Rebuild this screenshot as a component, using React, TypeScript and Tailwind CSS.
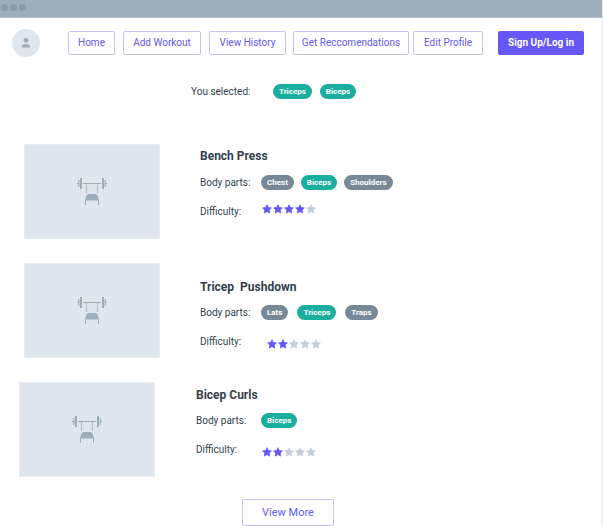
import React from "react";

type Tag = { name: string; active?: boolean };

type Exercise = {
  title: string;
  tags: Tag[];
  rating: number;
  rowClass: string;
  infoClass: string;
  bodyClass: string;
  labelClass: string;
  tagsClass: string;
  starsClass: string;
};

const navItems = [
  { label: "Home", className: "w-[47px]" },
  { label: "Add Workout", className: "ml-2 w-[78px]" },
  { label: "View History", className: "ml-2 w-[77px]" },
  { label: "Get Reccomendations", className: "ml-[7px] w-[116px]" },
  { label: "Edit Profile", className: "ml-1 w-[70px]" },
];

const exercises: Exercise[] = [
  {
    title: "Bench Press",
    tags: [{ name: "Chest" }, { name: "Biceps", active: true }, { name: "Shoulders" }],
    rating: 4,
    rowClass: "ml-6 mt-[43px]",
    infoClass: "ml-10 pt-[2px]",
    bodyClass: "mt-[6px]",
    labelClass: "w-[61px]",
    tagsClass: "gap-[7px]",
    starsClass: "pb-1",
  },
  {
    title: "Tricep  Pushdown",
    tags: [{ name: "Lats" }, { name: "Triceps", active: true }, { name: "Traps" }],
    rating: 2,
    rowClass: "ml-6 mt-6",
    infoClass: "ml-10 pt-[14px]",
    bodyClass: "mt-[5px]",
    labelClass: "w-[61px]",
    tagsClass: "gap-[9px]",
    starsClass: "ml-[5px] pt-[6px]",
  },
  {
    title: "Bicep Curls",
    tags: [{ name: "Biceps", active: true }],
    rating: 2,
    rowClass: "ml-[19px] mt-6",
    infoClass: "ml-[41px] pt-[3px]",
    bodyClass: "mt-[5px]",
    labelClass: "w-[65px]",
    tagsClass: "gap-2",
    starsClass: "pt-[6px]",
  },
];

function Pill({ name, active }: Tag) {
  return (
    <span
      className={`flex h-[15px] items-center rounded-full px-[6px] text-[8px] leading-[15px] font-bold text-white ${
        active ? "bg-[#1aae9f]" : "bg-[#788896]"
      }`}
    >
      {name}
    </span>
  );
}

function Stars({ rating, className }: { rating: number; className: string }) {
  return (
    <div className={`flex gap-px pl-px ${className}`} role="img" aria-label={`${rating} out of 5`}>
      {[1, 2, 3, 4, 5].map((n) => (
        <svg
          key={n}
          viewBox="0 0 20 20"
          strokeWidth="1.6"
          strokeLinejoin="round"
          className={`h-[10px] w-[10px] ${
            n <= rating ? "fill-[#6558f5] stroke-[#6558f5]" : "fill-[#c3cfd9] stroke-[#c3cfd9]"
          }`}
        >
          <path d="M10 1.500l2.600 5.600 6.200.7-4.600 4.200 1.300 6.100L10 15l-5.500 3.100 1.300-6.100L1.200 7.800l6.200-.7z" />
        </svg>
      ))}
    </div>
  );
}

function BenchIcon() {
  return (
    <svg viewBox="0 0 30 27" className="h-[27px] w-[30px] fill-[#9eadba]">
      <rect x="0" y="5" width="2" height="1" />
      <rect x="28" y="5" width="2" height="1" />
      <rect x="6" y="5" width="18" height="1" />
      <rect x="1" y="2" width="1.500" height="7" opacity=".8" />
      <rect x="3" y="0" width="2" height="11" />
      <rect x="25" y="0" width="2" height="11" />
      <rect x="27.500" y="2" width="1.500" height="7" opacity=".8" />
      <rect x="9" y="6" width="1" height="9" opacity=".8" />
      <rect x="20" y="6" width="1" height="9" opacity=".8" />
      <path d="M11.500 16h7q1.500 0 2 1.500l1.500 4.500v5h-1v-4.500H9V27H8v-5l1.500-4.500q.5-1.500 2-1.500z" />
    </svg>
  );
}

export default function App() {
  return (
    <div className="overflow-hidden border-r border-[#e3e8ed] bg-white font-['Roboto',sans-serif] text-[10px] text-[#323f4b]">
      <div className="flex h-[18px] items-center gap-[2px] border-b border-[#b4c0ca] bg-[#9eadba] pb-[2px] pl-[1px]">
        <span className="h-[7px] w-[7px] rounded-full bg-[#8b9aa8]" />
        <span className="h-[7px] w-[7px] rounded-full bg-[#8b9aa8]" />
        <span className="h-[7px] w-[7px] rounded-full bg-[#8b9aa8]" />
      </div>

      <header className="mt-[11px] flex items-center pl-3">
        <div className="flex h-7 w-7 items-center justify-center rounded-full bg-[#dfe6ed]">
          <svg viewBox="0 0 16 16" className="h-3 w-3 fill-[#9eadba]">
            <circle cx="8" cy="4.500" r="3.300" />
            <path d="M2.500 14v-1.500C2.500 10 5 9.500 8 9.500s5.500.5 5.500 3V14z" />
          </svg>
        </div>
        <nav className="ml-7 flex items-center">
          {navItems.map((item) => (
            <button
              key={item.label}
              className={`h-6 shrink-0 rounded-[2px] border border-[#c6c1fb] leading-[20px] whitespace-nowrap text-[#6558f5] ${item.className}`}
            >
              {item.label}
            </button>
          ))}
          <button className="ml-[15px] h-6 w-[86px] shrink-0 rounded-[2px] bg-[#6558f5] leading-[20px] font-bold whitespace-nowrap text-white">
            Sign Up/Log in
          </button>
        </nav>
      </header>

      <section className="mt-6 ml-[191px] flex h-5 items-center">
        <span className="w-[82px]">You selected:</span>
        <div className="flex gap-2 pt-px">
          <Pill name="Triceps" active />
          <Pill name="Biceps" active />
        </div>
      </section>

      <main>
        {exercises.map((ex) => (
          <article key={ex.title} className={`flex items-start ${ex.rowClass}`}>
            <div className="flex h-[95px] w-[136px] shrink-0 items-center justify-center border border-[#e8edf2] bg-[#dfe6ed]">
              <BenchIcon />
            </div>
            <div className={ex.infoClass}>
              <h2 className="text-[12px] leading-5 font-bold whitespace-pre">{ex.title}</h2>
              <div className={`flex h-5 items-center ${ex.bodyClass}`}>
                <span className={ex.labelClass}>Body parts:</span>
                <div className={`flex ${ex.tagsClass}`}>
                  {ex.tags.map((tag) => (
                    <Pill key={tag.name} {...tag} />
                  ))}
                </div>
              </div>
              <div className="mt-[9px] flex h-5 items-center">
                <span className={ex.labelClass}>Difficulty:</span>
                <Stars rating={ex.rating} className={ex.starsClass} />
              </div>
            </div>
          </article>
        ))}
      </main>

      <div className="mt-[22px] pl-[242px]">
        <button className="block h-[27px] w-[92px] rounded-[1px] border border-[#c6c1fb] pt-px text-[11px] text-[#6558f5]">
          View More
        </button>
      </div>
    </div>
  );
}
